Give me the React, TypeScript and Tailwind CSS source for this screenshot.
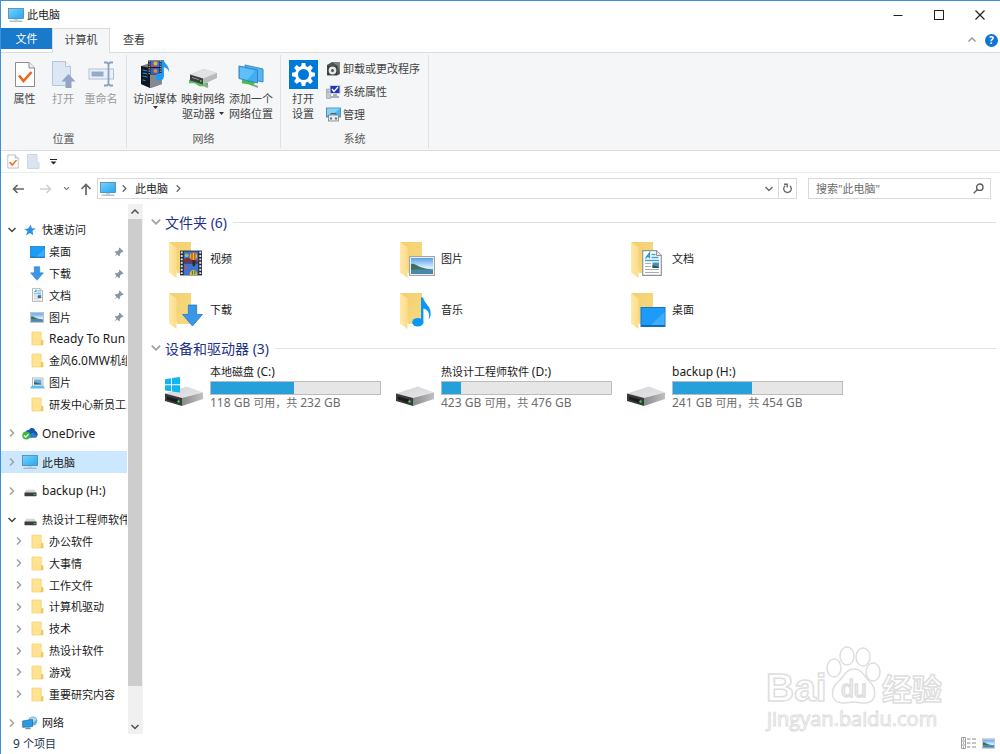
import React from 'react';

type IconProps = { className?: string };

/* ---------- Icons ---------- */

const Chevron = ({ dir, className = '' }: { dir: 'right' | 'down' | 'up'; className?: string }) => {
  const paths = {
    right: 'M3 1.5 L6.5 5 L3 8.5',
    down: 'M1.5 3 L5 6.5 L8.5 3',
    up: 'M1.5 6.5 L5 3 L8.5 6.5',
  };
  return (
    <svg viewBox="0 0 10 10" className={`shrink-0 ${className}`} fill="none" stroke="currentColor" strokeWidth="1.5">
      <path d={paths[dir]} />
    </svg>
  );
};

const MonitorIcon = ({ className = '' }: IconProps) => (
  <svg viewBox="0 0 16 14" className={className}>
    <defs>
      <linearGradient id="screen" x1="0" y1="0" x2="1" y2="1">
        <stop offset="0" stopColor="#7fd0fb" />
        <stop offset="0.5" stopColor="#4cbcf8" />
        <stop offset="1" stopColor="#2ba6ee" />
      </linearGradient>
    </defs>
    <rect x="0.5" y="0.5" width="15" height="10" fill="url(#screen)" stroke="#4a86ad" strokeWidth="0.8" />
    <path d="M6 11h4v1.5H6z" fill="#b9d3e2" />
    <path d="M1.5 13.2h13" stroke="#8fa5b2" strokeWidth="1" />
  </svg>
);

const FolderIcon = ({ className = '' }: IconProps) => (
  <svg viewBox="0 0 14 16" className={className}>
    <path d="M1 1h10v9h2v5H1z" fill="#ffe391" stroke="#f1cd69" strokeWidth="0.7" />
    <path d="M11 10h2v5h-2.5z" fill="#f0c75b" />
  </svg>
);

const CheckDocIcon = ({ className = '' }: IconProps) => (
  <svg viewBox="0 0 22 27" className={className}>
    <path d="M1.5 1.5h13.5l5.5 5.5v18.5h-19z" fill="#fff" stroke="#8d8d8d" />
    <path d="M15 1.5v5.5h5.5" fill="#eee" stroke="#8d8d8d" />
    <path d="M5 14.5l4.5 5.5 8-9" fill="none" stroke="#f0641e" strokeWidth="2.6" />
  </svg>
);

const OpenIcon = ({ className = '' }: IconProps) => (
  <svg viewBox="0 0 25 28" className={className}>
    <path d="M1.5 1.5h13l5 5v19h-18z" fill="#dde6f3" stroke="#b5c3dc" />
    <path d="M14.5 1.5v5h5" fill="#f3f6fb" stroke="#b5c3dc" />
    <path d="M17.5 14l7 7.5h-4V28h-6v-6.5h-4z" fill="#92a5c8" />
  </svg>
);

const RenameIcon = ({ className = '' }: IconProps) => (
  <svg viewBox="0 0 27 26" className={className} fill="none">
    <rect x="1" y="8" width="24.5" height="10" fill="#eaf0f8" stroke="#b0bfd9" />
    <rect x="3.5" y="10.5" width="12" height="5" fill="#97a9ca" />
    <path d="M16 1.5h3l1.5 1.5 1.5-1.5h3M20.5 3v20M16 24.5h3l1.5-1.5 1.5 1.5h3" stroke="#8c9fc3" strokeWidth="1.8" />
  </svg>
);

const MediaIcon = ({ className = '' }: IconProps) => (
  <svg viewBox="0 0 30 28" className={className}>
    <path d="M1 6l9-3 12 2v19l-11 4-10-4z" fill="#777c82" />
    <path d="M1 6l9 2v20l-9-4z" fill="#11171f" />
    <path d="M10 8l12-3v19l-12 4z" fill="#858a90" />
    <path d="M2.5 10l5 1M2.5 13l5 1M2.5 16l5 1M2.5 20l3 .6" stroke="#1f8fe8" strokeWidth="1" />
    <rect x="8" y="0.5" width="14" height="14" fill="#1b1b1b" />
    <path d="M9.2 1v13M20.8 1v13" stroke="#d9d9d9" strokeDasharray="1.2 1.2" />
    <rect x="10.5" y="1" width="9" height="6" fill="#3f6fd6" />
    <rect x="10.5" y="8" width="9" height="6" fill="#345fc4" />
    <circle cx="15.5" cy="3.5" r="2" fill="#f2b321" />
    <circle cx="15.5" cy="11" r="2" fill="#e98b26" />
    <path d="M11 5h3v2h-3z" fill="#d6402d" />
    <ellipse cx="19.5" cy="17" rx="4.2" ry="3.4" fill="#1b9cf2" />
    <path d="M21.5 0h2.4c.3 4 6 5.5 5 12-1-3.5-3-4.5-5-4.8V17h-2.4z" fill="#1b9cf2" />
  </svg>
);

const NetDriveIcon = ({ className = '' }: IconProps) => (
  <svg viewBox="0 0 30 20" className={className}>
    <path d="M1 13.5h6l5 3h8" stroke="#4dc45a" strokeWidth="3.4" fill="none" />
    <path d="M16 17l4 2" stroke="#9aa59b" strokeWidth="2.5" />
    <path d="M2 6.5L16 1l13 4v5l-14 6.5-13-4z" fill="#b9bbbd" />
    <path d="M2 6.5L16 1l13 4-14 5.5z" fill="#e1e2e3" />
    <path d="M2 6.5l13 4v6l-13-4z" fill="#3b3f3e" />
    <path d="M4 9.5l7 2.2" stroke="#8a9590" />
    <circle cx="12.8" cy="13" r="1" fill="#45d053" />
  </svg>
);

const NetPlaceIcon = ({ className = '' }: IconProps) => (
  <svg viewBox="0 0 27 24" className={className}>
    <path d="M4 17.500l7 1 5 2" stroke="#43bd51" strokeWidth="3.6" fill="none" />
    <path d="M15 21l5 2" stroke="#9aa59b" strokeWidth="2" />
    <path d="M7 1l18 4v13L7 14z" fill="#57b7f5" stroke="#3789c0" />
    <path d="M1 2l18.500 4v13L1 14.500z" fill="#41aef4" stroke="#3483bb" />
    <path d="M2 3l15 3.500-8 9.500-7-2z" fill="#74c9fa" opacity="0.6" />
  </svg>
);

const GearIcon = ({ className = '' }: IconProps) => (
  <svg viewBox="0 0 29 29" className={className}>
    <rect width="29" height="29" fill="#0078d7" />
    <g transform="translate(14.5 14.5)" fill="#fff">
      {[0, 45, 90, 135, 180, 225, 270, 315].map((a) => (
        <path key={a} d="M-2.4 -7.5L-1.8 -11.5H1.8L2.4 -7.5z" transform={`rotate(${a})`} />
      ))}
      <circle r="7" fill="none" stroke="#fff" strokeWidth="3" />
    </g>
  </svg>
);

const UninstallIcon = ({ className = '' }: IconProps) => (
  <svg viewBox="0 0 15 15" className={className}>
    <path d="M1 4l5-3h8v12l-3 1.5H1z" fill="#4b554e" />
    <path d="M6 1h8v12l-2-8z" fill="#7b857e" />
    <rect x="1.5" y="5" width="9.5" height="9" fill="#343b37" />
    <circle cx="6.5" cy="9.5" r="3.9" fill="#e5e7e8" />
    <circle cx="6.5" cy="9.5" r="1.5" fill="#4b554e" />
  </svg>
);

const SysPropsIcon = ({ className = '' }: IconProps) => (
  <svg viewBox="0 0 15 15" className={className}>
    <path d="M0.5 5h4v9.5h-4z" fill="#c5c9cf" stroke="#8f959d" strokeWidth="0.6" />
    <rect x="3.5" y="1" width="11" height="9" fill="#d2d6dc" />
    <rect x="4.5" y="2" width="9" height="7" fill="#2334b9" />
    <path d="M6 5l2 2.500 4-4.500" stroke="#fff" strokeWidth="1.3" fill="none" />
    <path d="M7 10h4v2h2v2H5v-2h2z" fill="#a9aeb6" />
    <circle cx="2" cy="8" r="0.7" fill="#3fbd4d" />
  </svg>
);

const ManageIcon = ({ className = '' }: IconProps) => (
  <svg viewBox="0 0 15 15" className={className}>
    <rect x="0.5" y="1" width="14" height="9" fill="#4fb9f3" stroke="#3d7fa8" strokeWidth="0.8" />
    <path d="M1 1.5h13L6 8H1z" fill="#86d1f8" />
    <path d="M5 8V6.5h5V8" stroke="#57616a" fill="none" />
    <rect x="2.5" y="8" width="10" height="6" fill="#e9ecee" stroke="#757e86" strokeWidth="0.8" />
    <path d="M5 10.5v2M10 10.5v2" stroke="#3e464d" strokeWidth="1.5" />
  </svg>
);

const StarIcon = ({ className = '' }: IconProps) => (
  <svg viewBox="0 0 12 12" className={className}>
    <path d="M6.8 0.5l1 3.7 4 .3-3.3 2.3.8 4.5-3.4-2.3L2 11.5l1.5-4.2L.3 5l4-.6z" fill="#2a92e4" />
  </svg>
);

const DesktopIcon = ({ className = '' }: IconProps) => (
  <svg viewBox="0 0 15 12" className={className}>
    <rect x="0.3" y="0.3" width="14.4" height="11.4" fill="#1c9bf8" stroke="#1277c4" strokeWidth="0.6" />
    <path d="M6 11L14.400 3v8z" fill="#3eadff" />
    <path d="M0.600 11.200h13.800" stroke="#0f5f9f" strokeWidth="0.6" />
  </svg>
);

const DownArrowIcon = ({ className = '' }: IconProps) => (
  <svg viewBox="0 0 20 22" className={className}>
    <path d="M6 1h8v9h5.5L10 21 .5 10H6z" fill="#3a96e6" stroke="#2a7cc7" strokeWidth="0.8" />
  </svg>
);

const DocIcon = ({ className = '' }: IconProps) => (
  <svg viewBox="0 0 20 26" className={className}>
    <path d="M.7.7h13.8l4.8 4.8v19.8H.7z" fill="#fff" stroke="#8f9498" strokeWidth="1.2" />
    <path d="M14.5.7v4.8h4.8" fill="#e5e7e8" stroke="#8f9498" />
    <path d="M3.5 8.5L7.5 3v5.5M5 6.5h2.5" stroke="#2d8fd0" strokeWidth="1.3" fill="none" />
    <path d="M9.5 4.5h4M9.5 7.5h7M3 10.5h14" stroke="#3f9fd8" strokeWidth="1.3" />
    <path d="M3 13.5h6M3 16.5h6M3 19.5h14M3 22.5h14" stroke="#a7adb2" />
    <rect x="10.5" y="12.5" width="6.5" height="5.5" fill="#4d8fb6" />
    <path d="M10.5 15l6.5 2v1h-6.5z" fill="#2e5a52" />
  </svg>
);

const PictureIcon = ({ className = '' }: IconProps) => (
  <svg viewBox="0 0 26 20" className={className}>
    <defs>
      <linearGradient id="sky" x1="0" y1="0" x2="0" y2="1">
        <stop offset="0" stopColor="#5ea0ea" />
        <stop offset="0.6" stopColor="#d8effb" />
        <stop offset="1" stopColor="#6fa5c8" />
      </linearGradient>
    </defs>
    <rect x="0.6" y="0.6" width="24.8" height="18.8" fill="#fff" stroke="#a0a6ab" strokeWidth="1.2" />
    <rect x="2" y="2" width="22" height="16" fill="url(#sky)" />
    <path d="M2 8c3-1 5 1 8 2.500s7 2 14 3.500H2z" fill="#39705e" />
    <path d="M2 14c7-1.500 14 0 22-.5V18H2z" fill="#4b86ab" />
  </svg>
);

const PictureShortcutIcon = ({ className = '' }: IconProps) => (
  <svg viewBox="0 0 15 12" className={className}>
    <rect x="2.5" y="1" width="10.5" height="8" fill="#f7f9fa" stroke="#a3a9ae" strokeWidth="0.8" />
    <rect x="4" y="2.5" width="7.5" height="5" fill="#6aa8dd" />
    <path d="M4 5l7.5 2v.5H4z" fill="#2f6a5b" />
    <path d="M1.5 9h12l1.5 2.5H0z" fill="#5cc0f2" />
  </svg>
);

const NoteIcon = ({ className = '' }: IconProps) => (
  <svg viewBox="0 0 20 30" className={className}>
    <ellipse cx="5.8" cy="25.2" rx="5.6" ry="4.3" fill="#0a97f5" />
    <path d="M9 .5h2.2C12 7 20 9 18.5 18.5c-.3 2-1 3-1.8 3.8C18.5 15 15 12.5 11.4 11.5v14H9z" fill="#0a97f5" />
  </svg>
);

const FilmIcon = ({ className = '' }: IconProps) => (
  <svg viewBox="0 0 23 26" className={className}>
    <rect width="23" height="26" fill="#2b2c31" />
    <path d="M1.8 1v25M21.2 1v25" stroke="#e4e4e4" strokeWidth="2" strokeDasharray="2 1.6" />
    <rect x="4" y="1" width="15" height="11.5" fill="#3d74d8" />
    <rect x="4" y="13.5" width="15" height="12" fill="#3d74d8" />
    <path d="M4 9c3-1 5-2 7 0l8 2v1.5H4z" fill="#7e3040" />
    <circle cx="14" cy="6" r="3.8" fill="#f2b622" />
    <path d="M12.5 2.500v7M15.5 2.500v7" stroke="#c93a28" strokeWidth="1.2" />
    <circle cx="7" cy="5" r="2" fill="#8dc765" />
    <path d="M13 10h3v5l-1.5 2-1.5-2z" fill="#2c2c20" />
    <path d="M5 16l4 2-3 2z" fill="#dc4a33" />
    <path d="M10 25.5c0-7 8-7 8 0z" fill="#f2b622" />
    <path d="M13 21v4M15.5 21v4" stroke="#3d8850" strokeWidth="1.2" />
  </svg>
);

const SmallDriveIcon = ({ className = '' }: IconProps) => (
  <svg viewBox="0 0 14 8" className={className}>
    <path d="M2.5.5h9L13.5 4H.5z" fill="#d4d6d8" />
    <rect x="0.5" y="3.5" width="13" height="4" rx="0.5" fill="#3b3f42" />
    <rect x="10.5" y="5" width="1.8" height="1.2" fill="#3ddb4c" />
  </svg>
);

const OneDriveIcon = ({ className = '' }: IconProps) => (
  <svg viewBox="0 0 16 13" className={className}>
    <path d="M3 8.5C2.5 4 5 2.5 7 3c1.5-3 6-2.5 6.3 1C16.5 5 16.5 10.5 13 10.5H5z" fill="#1557a8" />
    <path d="M7 10.5c-1-2 .3-3.5 2-3.5 1-2 4-1.5 4 .5 2.5 0 2.5 3 .5 3z" fill="#2b7bd0" />
    <circle cx="4.3" cy="8.5" r="4" fill="#3db54a" />
    <path d="M2.2 8.5l1.6 1.7 2.6-3" stroke="#fff" strokeWidth="1.2" fill="none" />
  </svg>
);

const NetworkIcon = ({ className = '' }: IconProps) => (
  <svg viewBox="0 0 16 14" className={className}>
    <circle cx="10.8" cy="5" r="4.6" fill="#61b2dc" />
    <path d="M8 2c2-1.5 5-1 6.5 1.5L12 6 8 5z" fill="#a9dcef" />
    <path d="M.7 5l9.8-1.5v7L.7 11.3z" fill="#2a9ae2" stroke="#2d6f9f" strokeWidth="0.8" />
    <path d="M4 11.5l4-.3 1 2H3z" fill="#7193aa" />
  </svg>
);

const PinIcon = ({ className = '' }: IconProps) => (
  <svg viewBox="0 0 10 10" className={className}>
    <path d="M5.5.5l4 4-.9.7-.9-.3-1.900 2 .1 1.800-.9.6L3.3 7.6.5 9.6l2-2.9L.8 5l.8-.9 1.700.1 2-1.900-.4-.9z" fill="#8597a6" />
  </svg>
);

const DriveIcon = ({ className = '', windows = false }: IconProps & { windows?: boolean }) => (
  <svg viewBox="0 0 40 32" className={className}>
    <defs>
      <linearGradient id="driveTop" x1="0" y1="0" x2="1" y2="1">
        <stop offset="0" stopColor="#d2d3d4" />
        <stop offset="1" stopColor="#e9e9eb" />
      </linearGradient>
      <linearGradient id="driveSide" x1="0" y1="0" x2="1" y2="0">
        <stop offset="0" stopColor="#8a8b8c" />
        <stop offset="1" stopColor="#bfc0c2" />
      </linearGradient>
    </defs>
    <path d="M1 17.500L23 10.500l16 6L18 23z" fill="url(#driveTop)" />
    <path d="M18 22l21-5.500V23L18 30z" fill="url(#driveSide)" />
    <path d="M1 17.500L18 22v8L1 25z" fill="#37393b" />
    <path d="M3 20.500l11 3v3.500L3 23.500z" fill="#191b1c" />
    <circle cx="14.5" cy="25.5" r="1.2" fill="#35d845" />
    {windows && (
      <path d="M1 3.2l6-.9v6H1zM8 2.1l8-1.100v7.300H8zM1 9.300h6v6l-6-.8zM8 9.300h8v7.300l-8-1.100z" fill="#12b5ef" />
    )}
  </svg>
);

const BigFolder = ({ children }: { children: React.ReactNode }) => (
  <span className="relative block h-[38px] w-[36px] shrink-0">
    <svg viewBox="0 0 36 38" className="h-full w-full">
      <defs>
        <linearGradient id="folderBack" x1="0" y1="0" x2="1" y2="1">
          <stop offset="0" stopColor="#f3cf6e" />
          <stop offset="1" stopColor="#f7da85" />
        </linearGradient>
        <linearGradient id="folderFront" x1="0" y1="0" x2="1" y2="0">
          <stop offset="0" stopColor="#ffe9a8" />
          <stop offset="1" stopColor="#fbdc8a" />
        </linearGradient>
      </defs>
      <path d="M1 1h22v31H9z" fill="url(#folderBack)" />
      <path d="M1 1l7.5 5.500V37L1 31.500z" fill="url(#folderFront)" />
    </svg>
    {children}
  </span>
);

/* ---------- Data ---------- */

type TreeRow = {
  label: string;
  icon: React.ReactNode;
  level: 0 | 1;
  expand?: 'right' | 'down';
  pinned?: boolean;
  selected?: boolean;
  spaced?: boolean;
};

const folder = <FolderIcon className="h-[15px] w-[13px]" />;

const tree: TreeRow[] = [
  { label: '快速访问', icon: <StarIcon className="size-[12px]" />, level: 0, expand: 'down' },
  { label: '桌面', icon: <DesktopIcon className="h-[12px] w-[15px]" />, level: 1, pinned: true },
  { label: '下载', icon: <DownArrowIcon className="h-[15px] w-[14px]" />, level: 1, pinned: true },
  { label: '文档', icon: <DocIcon className="h-[14px] w-[11px]" />, level: 1, pinned: true },
  { label: '图片', icon: <PictureIcon className="h-[11px] w-[14px]" />, level: 1, pinned: true },
  { label: 'Ready To Run', icon: folder, level: 1 },
  { label: '金风6.0MW机组', icon: folder, level: 1 },
  { label: '图片', icon: <PictureShortcutIcon className="h-[12px] w-[15px]" />, level: 1 },
  { label: '研发中心新员工...', icon: folder, level: 1 },
  { label: 'OneDrive', icon: <OneDriveIcon className="h-[13px] w-[16px]" />, level: 0, expand: 'right', spaced: true },
  { label: '此电脑', icon: <MonitorIcon className="h-[14px] w-[16px]" />, level: 0, expand: 'right', spaced: true, selected: true },
  { label: 'backup (H:)', icon: <SmallDriveIcon className="mt-1 h-[8px] w-[13px]" />, level: 0, expand: 'right', spaced: true },
  { label: '热设计工程师软件', icon: <SmallDriveIcon className="mt-1 h-[8px] w-[13px]" />, level: 0, expand: 'down', spaced: true },
  { label: '办公软件', icon: folder, level: 1, expand: 'right' },
  { label: '大事情', icon: folder, level: 1, expand: 'right' },
  { label: '工作文件', icon: folder, level: 1, expand: 'right' },
  { label: '计算机驱动', icon: folder, level: 1, expand: 'right' },
  { label: '技术', icon: folder, level: 1, expand: 'right' },
  { label: '热设计软件', icon: folder, level: 1, expand: 'right' },
  { label: '游戏', icon: folder, level: 1, expand: 'right' },
  { label: '重要研究内容', icon: folder, level: 1, expand: 'right' },
  { label: '网络', icon: <NetworkIcon className="h-[14px] w-[16px]" />, level: 0, expand: 'right', spaced: true },
];

const folders = [
  { name: '视频', overlay: <FilmIcon className="absolute top-[9px] left-[12px] h-[26px] w-[22px]" /> },
  { name: '图片', overlay: <PictureIcon className="absolute top-[15px] left-[10px] h-[20px] w-[26px]" /> },
  { name: '文档', overlay: <DocIcon className="absolute top-[9px] left-[12px] h-[26px] w-[20px]" /> },
  { name: '下载', overlay: <DownArrowIcon className="absolute top-[12px] left-[14px] h-[23px] w-[21px]" /> },
  { name: '音乐', overlay: <NoteIcon className="absolute top-[5px] left-[13px] h-[30px] w-[20px]" /> },
  { name: '桌面', overlay: <DesktopIcon className="absolute top-[15px] left-[10px] h-[20px] w-[26px]" /> },
];

const drives = [
  { name: '本地磁盘 (C:)', info: '118 GB 可用，共 232 GB', used: 49, windows: true },
  { name: '热设计工程师软件 (D:)', info: '423 GB 可用，共 476 GB', used: 11, windows: false },
  { name: 'backup (H:)', info: '241 GB 可用，共 454 GB', used: 47, windows: false },
];

/* ---------- Pieces ---------- */

// Latin runs are set one pixel larger than the Chinese text around them
const Mixed = ({ text }: { text: string }) => (
  <>
    {text.split(/([A-Za-z0-9.:()][A-Za-z0-9.:() ]*)/).map((part, i) =>
      i % 2 ? <span key={i} className="text-[12px]">{part}</span> : part
    )}
  </>
);

const TitleBar = () => (
  <header className="flex h-[27px] shrink-0 items-center pl-[7px]">
    <MonitorIcon className="h-[14px] w-[16px]" />
    <h1 className="ml-[3px] flex-1">此电脑</h1>
    <button aria-label="最小化" className="flex h-full w-[41px] items-center justify-center">
      <svg viewBox="0 0 12 12" className="size-3" stroke="#222"><path d="M1.5 6.5h9" /></svg>
    </button>
    <button aria-label="最大化" className="flex h-full w-[41px] items-center justify-center">
      <svg viewBox="0 0 12 12" className="size-3" stroke="#222" fill="none"><rect x="1.5" y="1.5" width="9" height="9" /></svg>
    </button>
    <button aria-label="关闭" className="flex h-full w-[41px] items-center justify-center">
      <svg viewBox="0 0 12 12" className="size-3" stroke="#222" strokeWidth="1.2"><path d="M1.5 1.5l9 9M10.5 1.5l-9 9" /></svg>
    </button>
  </header>
);

const TabBar = () => (
  <div className="flex h-[25px] shrink-0 border-b border-[#dadbdc]">
    <button className="h-[21px] w-[51px] bg-[#1979ca] text-white">文件</button>
    <button className="-mb-px h-[25px] w-[58px] border border-b-0 border-[#dadbdc] bg-[#f5f6f7] pb-1 text-[#3a3a3a]">计算机</button>
    <button className="ml-[6px] h-[23px] w-[36px] text-[#3a3a3a]">查看</button>
    <div className="ml-auto flex h-[24px] items-center gap-[8px] pr-[2px]">
      <button aria-label="最小化功能区"><Chevron dir="up" className="size-[10px] text-[#9a9a9a]" /></button>
      <button aria-label="帮助" className="flex size-[13px] items-center justify-center rounded-full bg-[#0d74d1] text-[10px] leading-none font-bold text-white">?</button>
    </div>
  </div>
);

const Caret = ({ className = '' }: IconProps) => (
  <svg viewBox="0 0 5 3" className={`h-[3px] w-[5px] ${className}`}><path d="M0 0h5L2.5 3z" fill="#333" /></svg>
);

const BigButton = ({ icon, lines, muted, width, arrow }: {
  icon: React.ReactNode; lines: string[]; muted?: boolean; width: string; arrow?: 'below' | 'inline';
}) => (
  <button className={`flex flex-col items-center ${width} ${muted ? 'text-[#9b9b9b]' : 'text-[#444]'}`}>
    <span className="flex h-[34px] items-center">{icon}</span>
    {lines.map((line, i) => (
      <span key={line} className="flex items-center leading-[15px] whitespace-nowrap">
        {line}
        {arrow === 'inline' && i === lines.length - 1 && <Caret className="ml-1" />}
      </span>
    ))}
    {arrow === 'below' && <Caret />}
  </button>
);

const RibbonGroup = ({ title, width, children }: { title: string; width: string; children: React.ReactNode }) => (
  <section className={`my-[2px] flex flex-col border-r border-[#e0e1e3] ${width}`}>
    <div className="flex flex-1 pt-[2px] pl-[4px]">{children}</div>
    <h2 className="h-[18px] text-center leading-[18px] text-[#5c5c5c]">{title}</h2>
  </section>
);

const Ribbon = () => (
  <div className="flex h-[98px] shrink-0 border-b border-[#dadbdc] bg-[#f5f6f7]">
    <RibbonGroup title="位置" width="w-[126px]">
      <BigButton width="w-[39px]" icon={<CheckDocIcon className="h-[27px] w-[22px]" />} lines={['属性']} />
      <BigButton width="w-[38px]" muted icon={<OpenIcon className="h-[28px] w-[25px]" />} lines={['打开']} />
      <BigButton width="w-[38px]" muted icon={<RenameIcon className="h-[26px] w-[27px]" />} lines={['重命名']} />
    </RibbonGroup>
    <RibbonGroup title="网络" width="w-[154px]">
      <BigButton width="w-[48px]" icon={<MediaIcon className="h-[28px] w-[30px]" />} lines={['访问媒体']} arrow="below" />
      <BigButton width="w-[48px]" icon={<NetDriveIcon className="mt-2 h-[20px] w-[30px]" />} lines={['映射网络', '驱动器']} arrow="inline" />
      <BigButton width="w-[48px]" icon={<NetPlaceIcon className="mt-1 h-[24px] w-[27px]" />} lines={['添加一个', '网络位置']} />
    </RibbonGroup>
    <RibbonGroup title="系统" width="w-[148px]">
      <BigButton width="w-[36px]" icon={<GearIcon className="size-[29px]" />} lines={['打开', '设置']} />
      <div className="ml-[5px] flex flex-col">
        {[
          { label: '卸载或更改程序', icon: <UninstallIcon className="size-[15px]" /> },
          { label: '系统属性', icon: <SysPropsIcon className="size-[15px]" /> },
          { label: '管理', icon: <ManageIcon className="size-[15px]" /> },
        ].map((item) => (
          <button key={item.label} className="flex h-[23px] items-center gap-[2px] whitespace-nowrap text-[#444]">
            {item.icon}
            {item.label}
          </button>
        ))}
      </div>
    </RibbonGroup>
  </div>
);

const QuickBar = () => (
  <div className="flex h-[22px] shrink-0 items-center gap-[8px] border-b border-[#ececec] pl-[6px]">
    <button aria-label="属性"><CheckDocIcon className="h-[15px] w-[12px]" /></button>
    <button aria-label="新建文件夹">
      <svg viewBox="0 0 13 15" className="h-[15px] w-[13px]"><path d="M.5.5h9.5v8h2v6H.5z" fill="#dbe4f2" stroke="#cbd6e8" /></svg>
    </button>
    <button aria-label="自定义快速访问工具栏" className="ml-[2px]">
      <svg viewBox="0 0 7 6" className="h-[6px] w-[7px]"><path d="M0 .5h7" stroke="#222" /><path d="M.5 2.5h6l-3 3z" fill="#222" /></svg>
    </button>
  </div>
);

const AddressBar = () => (
  <div className="flex h-[31px] shrink-0 items-center pr-[9px] pl-[11px] text-[#6b6b6b]">
    <button aria-label="后退">
      <svg viewBox="0 0 12 10" className="h-[10px] w-[12px]" fill="none" stroke="#666" strokeWidth="1.7"><path d="M12 5H1.5M5.5 1L1.5 5l4 4" /></svg>
    </button>
    <button aria-label="前进" className="ml-[16px]">
      <svg viewBox="0 0 12 10" className="h-[10px] w-[12px]" fill="none" stroke="#cfcfcf" strokeWidth="1.5"><path d="M0 5h10.5M6.5 1l4 4-4 4" /></svg>
    </button>
    <button aria-label="最近位置" className="ml-[11px]"><Chevron dir="down" className="size-[7px]" /></button>
    <button aria-label="上移" className="ml-[10px]">
      <svg viewBox="0 0 12 12" className="size-[12px]" fill="none" stroke="#666" strokeWidth="1.7"><path d="M6 12V1.5M1.5 6L6 1.5 10.5 6" /></svg>
    </button>
    <nav aria-label="地址" className="ml-[5px] flex h-[21px] flex-1 items-center border border-[#d9d9d9] pl-[2px]">
      <MonitorIcon className="h-[14px] w-[16px]" />
      <Chevron dir="right" className="ml-[4px] size-[9px]" />
      <button className="ml-[6px] text-[#1a1a1a]">此电脑</button>
      <Chevron dir="right" className="ml-[6px] size-[9px]" />
      <button aria-label="历史记录" className="ml-auto px-[4px]"><Chevron dir="down" className="size-[10px]" /></button>
      <button aria-label="刷新" className="flex h-full w-[18px] items-center justify-center border-l border-[#d9d9d9]">
        <svg viewBox="0 0 11 11" className="size-[11px]" fill="none" stroke="#6b6b6b" strokeWidth="1.4">
          <path d="M7.8 2.700A3.800 3.800 0 1 1 3.200 2.700" />
          <path d="M2 1.200h3.200v3.300" />
        </svg>
      </button>
    </nav>
    <label className="ml-[11px] flex h-[21px] w-[183px] items-center border border-[#d9d9d9] pr-[6px] pl-[7px]">
      <input aria-label="搜索" placeholder={'搜索"此电脑"'} className="min-w-0 flex-1 outline-none placeholder:text-[#6d6d6d]" />
      <svg viewBox="0 0 11 11" className="size-[11px]" fill="none" stroke="#5f5f5f" strokeWidth="1.4">
        <circle cx="6.8" cy="4.2" r="3.2" />
        <path d="M4.5 6.5L.7 10.3" />
      </svg>
    </label>
  </div>
);

const Sidebar = () => (
  <aside className="flex w-[142px] shrink-0 border-r border-[#f2f2f2]">
    <ul className="flex w-[126px] flex-col pt-[15px]">
      {tree.map((row, i) => (
        <li
          key={i}
          className={`flex min-h-0 flex-1 items-center overflow-hidden ${row.spaced ? 'mt-[7px]' : ''} ${row.level ? 'pl-[13px]' : 'pl-[6px]'} ${row.selected ? 'bg-[#cce8ff]' : ''}`}
        >
          <span className="w-[9px] shrink-0">
            {row.expand && <Chevron dir={row.expand} className={`size-[10px] ${row.expand === 'down' ? 'text-[#444]' : 'text-[#a0a0a0]'}`} />}
          </span>
          <span className="ml-[5px] flex w-[18px] shrink-0 justify-center">{row.icon}</span>
          <span className="ml-[3px] flex-1 overflow-hidden whitespace-nowrap"><Mixed text={row.label} /></span>
          {row.pinned && <PinIcon className="mr-[3px] size-[10px]" />}
        </li>
      ))}
    </ul>
    <div className="ml-px flex w-[14px] flex-col bg-[#f0f0f0] text-[#505050]">
      <button aria-label="向上滚动" className="flex h-[15px] items-center justify-center"><Chevron dir="up" className="size-[10px]" /></button>
      <div className="flex-1 bg-[#cdcdcd]" />
      <button aria-label="向下滚动" className="mt-[33px] flex h-[15px] items-center justify-center"><Chevron dir="down" className="size-[10px]" /></button>
    </div>
  </aside>
);

const SectionTitle = ({ children }: { children: React.ReactNode }) => (
  <h2 className="flex h-[20px] items-center pr-[4px] text-[14px] text-[#1e3287]">
    <Chevron dir="down" className="mr-[3px] size-[12px] text-[#a0a0a0]" />
    {children}
    <span className="ml-[6px] h-px flex-1 bg-[#e2e2e2]" />
  </h2>
);

const Content = () => (
  <main className="min-w-0 flex-1 pt-[8px] pl-[7px]">
    <SectionTitle>文件夹 (6)</SectionTitle>
    <ul className="mt-[9px] grid grid-cols-[repeat(auto-fill,231px)] gap-y-[13px] pl-[18px]">
      {folders.map((f) => (
        <li key={f.name} className="flex">
          <BigFolder>{f.overlay}</BigFolder>
          <span className="ml-[6px] leading-[36px]">{f.name}</span>
        </li>
      ))}
    </ul>
    <div className="mt-[8px]">
      <SectionTitle>设备和驱动器 (3)</SectionTitle>
    </div>
    <ul className="mt-[6px] grid grid-cols-[repeat(auto-fill,231px)] pl-[14px]">
      {drives.map((d) => (
        <li key={d.name} className="flex">
          <DriveIcon windows={d.windows} className="mt-[12px] h-[32px] w-[40px] shrink-0" />
          <div className="ml-[6px] w-[171px]">
            <div className="h-[17px] leading-[15px] whitespace-nowrap"><Mixed text={d.name} /></div>
            <div
              role="progressbar"
              aria-label={d.name}
              aria-valuenow={d.used}
              className="h-[14px] border border-[#bcbcbc] bg-[#e6e6e6]"
            >
              <div className="h-full bg-[#26a0da]" style={{ width: `${d.used}%` }} />
            </div>
            <div className="h-[17px] leading-[16px] whitespace-nowrap text-[#6d6d6d]"><Mixed text={d.info} /></div>
          </div>
        </li>
      ))}
    </ul>
  </main>
);

const StatusBar = () => (
  <footer className="flex h-[20px] shrink-0 items-center pr-[5px] pb-[2px] pl-[12px] text-[#1e3250]">
    <span className="flex-1"><Mixed text="9 个项目" /></span>
    <button aria-label="详细信息">
      <svg viewBox="0 0 15 12" className="h-[12px] w-[15px]">
        <path d="M.5.5h4v11h-4zM.5 4h4M.5 8h4" fill="#fff" stroke="#9c9c9c" />
        <path d="M2 2h1M2 6h1" stroke="#2d7dc8" />
        <path d="M2 10h1" stroke="#d9432e" />
        <path d="M6 2h3.5M11 2h4M6 6h3.5M11 6h4M6 10h3.5M11 10h4" stroke="#8a8a8a" />
      </svg>
    </button>
    <button aria-label="大图标" className="ml-[6px]"><PictureIcon className="h-[11px] w-[13px]" /></button>
  </footer>
);

const Watermark = () => (
  <svg viewBox="0 0 190 92" className="pointer-events-none absolute right-[45px] bottom-[20px] h-[92px] w-[190px]" fill="#fff" stroke="#dedede" strokeWidth="1.5">
    <ellipse cx="69" cy="26" rx="7" ry="9" />
    <ellipse cx="82" cy="14" rx="7" ry="9" />
    <ellipse cx="98" cy="15" rx="7" ry="9" />
    <ellipse cx="108" cy="30" rx="7" ry="9" />
    <path d="M89 27c8 0 10 7 15 12 8 7 8 21-3 22-6 0-8-1-12-1s-7 1-12 1c-12-1-12-14-4-21 6-5 8-13 16-13z" />
    <text x="1" y="59" fontSize="39" fontWeight="700" fontFamily="Liberation Sans, sans-serif">Bai</text>
    <text x="76" y="55" fontSize="23" fontFamily="Liberation Sans, sans-serif">du</text>
    <text x="117" y="58" fontSize="30" fontWeight="700" fontFamily="Noto Sans CJK SC, sans-serif">经验</text>
    <text x="2" y="84" fontSize="20" strokeWidth="1" fontFamily="Open Sans, sans-serif">jingyan.baidu.com</text>
  </svg>
);

export default function App() {
  return (
    <div className="relative flex h-screen min-h-[600px] flex-col overflow-hidden border-t border-l border-[#3b8fdb] bg-white font-['Noto_Sans','Noto_Sans_CJK_SC',sans-serif] text-[11px] leading-[15px] text-[#1a1a1a]">
      <TitleBar />
      <TabBar />
      <Ribbon />
      <QuickBar />
      <AddressBar />
      <div className="flex min-h-0 flex-1">
        <Sidebar />
        <Content />
      </div>
      <StatusBar />
      <Watermark />
    </div>
  );
}
